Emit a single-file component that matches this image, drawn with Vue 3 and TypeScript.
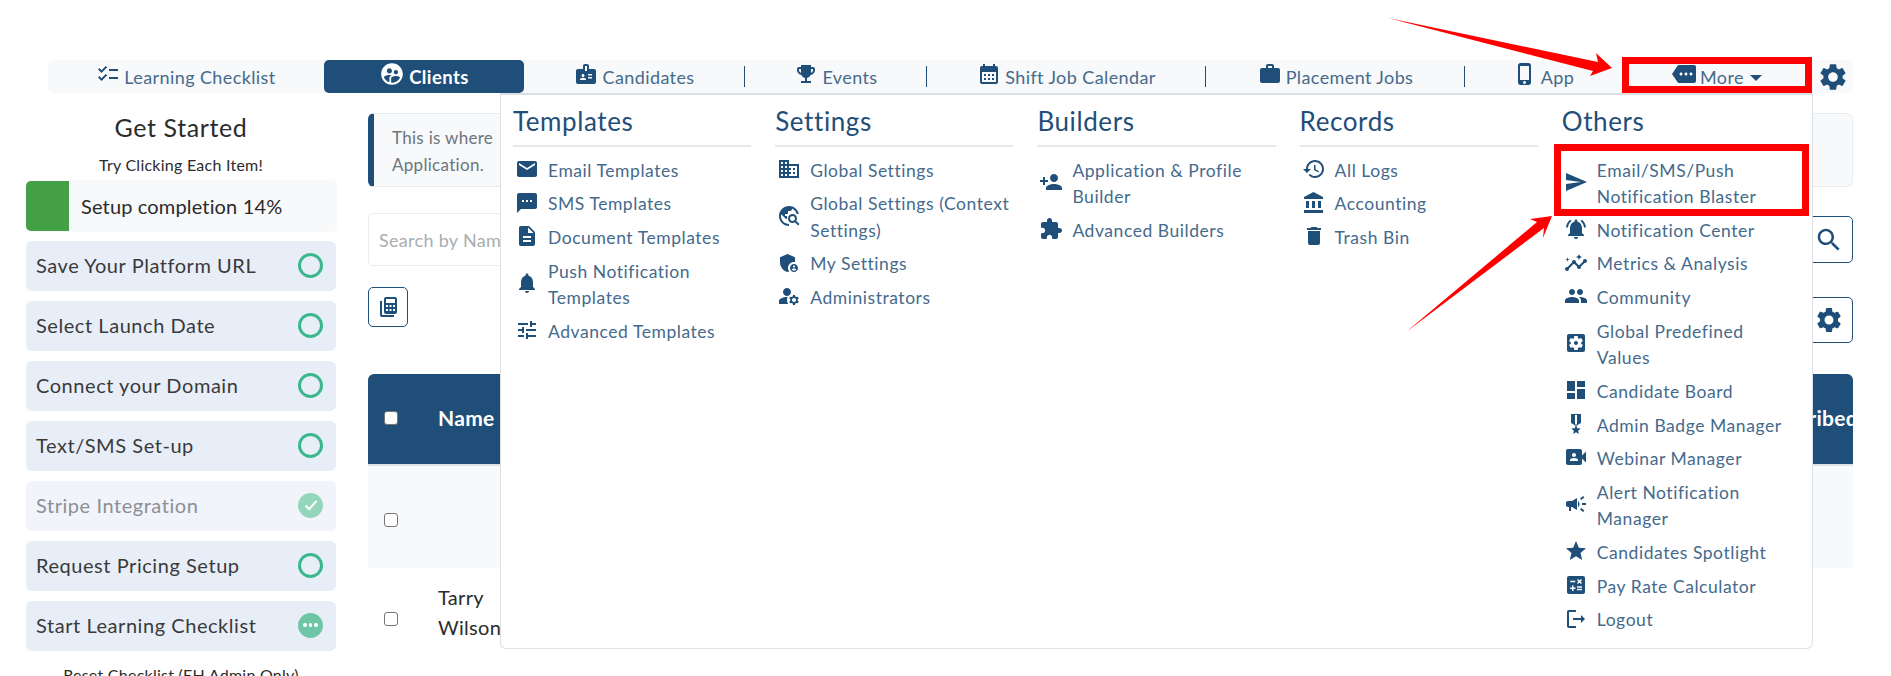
<script setup lang="ts">
type NavItem = { label: string; icon: string; active?: boolean; sep?: boolean; caret?: boolean }
type MenuItem = { label: string; icon: string }
type MenuColumn = { title: string; items: MenuItem[] }
type Step = { label: string; state: 'open' | 'done' | 'busy' }

const icons: Record<string, string> = {
  checklist: 'M22 7h-9v2h9V7zm0 8h-9v2h9v-2zM5.54 11L2 7.46l1.41-1.41 2.12 2.12 4.24-4.24 1.41 1.41L5.54 11zm0 8L2 15.46l1.41-1.41 2.12 2.12 4.24-4.24 1.41 1.41L5.54 19z',
  clients: 'M11.99 2c-5.52 0-10 4.48-10 10s4.48 10 10 10 10-4.48 10-10-4.48-10-10-10zm3.61 6.34c1.07 0 1.93.86 1.93 1.93 0 1.07-.86 1.93-1.93 1.93-1.07 0-1.93-.86-1.93-1.93-.01-1.07.86-1.93 1.93-1.93zm-6-1.58c1.3 0 2.36 1.06 2.36 2.36 0 1.3-1.06 2.36-2.36 2.36s-2.36-1.06-2.36-2.36c0-1.31 1.05-2.36 2.36-2.36zm0 9.13v3.75c-2.4-.75-4.3-2.6-5.14-4.96 1.05-1.12 3.67-1.69 5.14-1.69.53 0 1.2.08 1.9.22-1.64.87-1.9 2.02-1.9 2.68zM11.99 20c-.27 0-.53-.01-.79-.04v-4.07c0-1.42 2.94-2.13 4.4-2.13 1.07 0 2.92.39 3.84 1.15-1.17 2.97-4.06 5.09-7.45 5.09z',
  badge: 'M20 7h-5V4c0-1.1-.9-2-2-2h-2c-1.1 0-2 .9-2 2v3H4c-1.1 0-2 .9-2 2v11c0 1.1.9 2 2 2h16c1.1 0 2-.9 2-2V9c0-1.1-.9-2-2-2zM9 12c.83 0 1.5.67 1.5 1.5S9.83 15 9 15s-1.5-.67-1.5-1.5S8.17 12 9 12zm3 6H6v-.75c0-1 2-1.5 3-1.5s3 .5 3 1.5V18zm1-9h-2V4h2v5zm5 7.5h-4V15h4v1.5zm0-3h-4V12h4v1.5z',
  trophy: 'M19 5h-2V3H7v2H5c-1.1 0-2 .9-2 2v1c0 2.55 1.92 4.63 4.39 4.94.63 1.5 1.98 2.63 3.61 2.96V19H7v2h10v-2h-4v-3.1c1.63-.33 2.98-1.46 3.61-2.96C19.08 12.63 21 10.55 21 8V7c0-1.1-.9-2-2-2zM5 8V7h2v3.82C5.84 10.4 5 9.3 5 8zm14 0c0 1.3-.84 2.4-2 2.82V7h2v1z',
  calendar: 'M19 4h-1V2h-2v2H8V2H6v2H5c-1.11 0-1.99.9-1.99 2L3 20a2 2 0 0 0 2 2h14c1.1 0 2-.9 2-2V6c0-1.1-.9-2-2-2zm0 16H5V10h14v10zM9 14H7v-2h2v2zm4 0h-2v-2h2v2zm4 0h-2v-2h2v2zm-8 4H7v-2h2v2zm4 0h-2v-2h2v2zm4 0h-2v-2h2v2z',
  work: 'M20 6h-4V4c0-1.11-.89-2-2-2h-4c-1.11 0-2 .89-2 2v2H4c-1.11 0-1.99.89-1.99 2L2 19c0 1.11.89 2 2 2h16c1.11 0 2-.89 2-2V8c0-1.11-.89-2-2-2zm-6 0h-4V4h4v2z',
  phone: 'M15.5 1h-8C6.12 1 5 2.12 5 3.5v17C5 21.88 6.12 23 7.5 23h8c1.38 0 2.5-1.12 2.5-2.5v-17C18 2.12 16.88 1 15.5 1zm-4 21c-.83 0-1.5-.67-1.5-1.5s.67-1.5 1.5-1.5 1.5.67 1.5 1.5-.67 1.5-1.5 1.5zm4.5-4H7V4h9v14z',
  more: 'M22 3H7c-.69 0-1.23.35-1.59.88L0 12l5.41 8.11c.36.53.9.89 1.59.89h15c1.1 0 2-.9 2-2V5c0-1.1-.9-2-2-2zM9 13.5c-.83 0-1.5-.67-1.5-1.5s.67-1.5 1.5-1.5 1.5.67 1.5 1.5-.67 1.5-1.5 1.5zm5 0c-.83 0-1.5-.67-1.5-1.5s.67-1.5 1.5-1.5 1.5.67 1.5 1.5-.67 1.5-1.5 1.5zm5 0c-.83 0-1.5-.67-1.5-1.5s.67-1.5 1.5-1.5 1.5.67 1.5 1.5-.67 1.5-1.5 1.5z',
  gear: 'M19.14 12.94c.04-.3.06-.61.06-.94 0-.32-.02-.64-.07-.94l2.03-1.58c.18-.14.23-.41.12-.61l-1.92-3.32c-.12-.22-.37-.29-.59-.22l-2.39.96c-.5-.38-1.03-.7-1.62-.94l-.36-2.54c-.04-.24-.24-.41-.48-.41h-3.84c-.24 0-.43.17-.47.41l-.36 2.54c-.59.24-1.13.57-1.62.94l-2.39-.96c-.22-.08-.47 0-.59.22L2.74 8.87c-.12.21-.08.47.12.61l2.03 1.58c-.05.3-.09.63-.09.94s.02.64.07.94l-2.03 1.58c-.18.14-.23.41-.12.61l1.92 3.32c.12.22.37.29.59.22l2.39-.96c.5.38 1.03.7 1.62.94l.36 2.54c.05.24.24.41.48.41h3.84c.24 0 .44-.17.47-.41l.36-2.54c.59-.24 1.13-.56 1.62-.94l2.39.96c.22.08.47 0 .59-.22l1.92-3.32c.12-.22.07-.47-.12-.61l-2.01-1.58zM12 15.6c-1.98 0-3.6-1.62-3.6-3.6s1.62-3.6 3.6-3.6 3.6 1.62 3.6 3.6-1.62 3.6-3.6 3.6z',
  search: 'M15.5 14h-.79l-.28-.27C15.41 12.59 16 11.11 16 9.5 16 5.91 13.09 3 9.5 3S3 5.91 3 9.5 5.91 16 9.5 16c1.61 0 3.09-.59 4.23-1.57l.27.28v.79l5 4.99L20.49 19l-4.99-5zm-6 0C7.01 14 5 11.99 5 9.5S7.01 5 9.5 5 14 7.01 14 9.5 11.99 14 9.5 14z',
  email: 'M20 4H4c-1.1 0-1.99.9-1.99 2L2 18c0 1.1.9 2 2 2h16c1.1 0 2-.9 2-2V6c0-1.1-.9-2-2-2zm0 4l-8 5-8-5V6l8 5 8-5v2z',
  sms: 'M20 2H4c-1.1 0-1.99.9-1.99 2L2 22l4-4h14c1.1 0 2-.9 2-2V4c0-1.1-.9-2-2-2zM9 11H7V9h2v2zm4 0h-2V9h2v2zm4 0h-2V9h2v2z',
  doc: 'M14 2H6c-1.1 0-1.99.9-1.99 2L4 20c0 1.1.89 2 1.99 2H18c1.1 0 2-.9 2-2V8l-6-6zm2 16H8v-2h8v2zm0-4H8v-2h8v2zm-3-5V3.5L18.5 9H13z',
  bell: 'M12 22c1.1 0 2-.9 2-2h-4c0 1.1.89 2 2 2zm6-6v-5c0-3.07-1.64-5.64-4.5-6.32V4c0-.83-.67-1.5-1.5-1.5s-1.5.67-1.5 1.5v.68C7.63 5.36 6 7.92 6 11v5l-2 2v1h16v-1l-2-2z',
  tune: 'M3 17v2h6v-2H3zM3 5v2h10V5H3zm10 16v-2h8v-2h-8v-2h-2v6h2zM7 9v2H3v2h4v2h2V9H7zm14 4v-2H11v2h10zm-6-4h2V7h4V5h-4V3h-2v6z',
  domain: 'M12 7V3H2v18h20V7H12zM6 19H4v-2h2v2zm0-4H4v-2h2v2zm0-4H4V9h2v2zm0-4H4V5h2v2zm4 12H8v-2h2v2zm0-4H8v-2h2v2zm0-4H8V9h2v2zm0-4H8V5h2v2zm10 12h-8v-2h2v-2h-2v-2h2v-2h-2V9h8v10zm-2-8h-2v2h2v-2zm0 4h-2v2h2v-2z',
  travel: 'M19.3 16.9c.4-.7.7-1.5.7-2.4 0-2.5-2-4.5-4.5-4.5S11 12 11 14.5s2 4.5 4.5 4.5c.9 0 1.7-.3 2.4-.7l3.2 3.2 1.4-1.4-3.2-3.2zm-3.8.1c-1.4 0-2.5-1.1-2.5-2.5s1.1-2.5 2.5-2.5 2.5 1.1 2.5 2.5-1.1 2.5-2.5 2.5zM12 20v2C6.48 22 2 17.52 2 12S6.48 2 12 2c4.84 0 8.87 3.44 9.8 8h-2.07c-.64-2.46-2.4-4.47-4.73-5.41V5c0 1.1-.9 2-2 2h-2v2c0 .55-.45 1-1 1H8v2h2v3H9l-4.79-4.79C4.08 10.79 4 11.38 4 12c0 4.41 3.59 8 8 8z',
  shield: 'M17 11c.34 0 .67.04 1 .09V6.27L10.5 3 3 6.27v4.91c0 4.54 3.2 8.79 7.5 9.82.55-.13 1.08-.32 1.6-.55-.69-.98-1.1-2.17-1.1-3.45 0-3.31 2.69-6 6-6zM17 13c-2.21 0-4 1.79-4 4s1.79 4 4 4 4-1.79 4-4-1.79-4-4-4zm0 1.38c.62 0 1.12.51 1.12 1.12s-.51 1.12-1.12 1.12-1.12-.51-1.12-1.12.5-1.12 1.12-1.12zm0 5.37c-.93 0-1.74-.46-2.24-1.17.05-.72 1.51-1.08 2.24-1.08s2.19.36 2.24 1.08c-.5.71-1.31 1.17-2.24 1.17z',
  admins: 'M10.67 13.02c-.22-.01-.44-.02-.67-.02-2.42 0-4.68.67-6.61 1.82-.88.52-1.39 1.5-1.39 2.53V20h9.26c-.79-1.13-1.26-2.51-1.26-4 0-1.07.25-2.07.67-2.98zM10 12c2.21 0 4-1.79 4-4s-1.79-4-4-4-4 1.79-4 4 1.79 4 4 4zM20.75 16c0-.22-.03-.42-.06-.63l1.14-1.01-1-1.73-1.45.49c-.32-.27-.68-.48-1.08-.63L18 11h-2l-.3 1.49c-.4.15-.76.36-1.08.63l-1.45-.49-1 1.73 1.14 1.01c-.03.21-.06.41-.06.63s.03.42.06.63l-1.14 1.01 1 1.73 1.45-.49c.32.27.68.48 1.08.63L16 21h2l.3-1.49c.4-.15.76-.36 1.08-.63l1.45.49 1-1.73-1.14-1.01c.03-.21.06-.41.06-.63zM17 18c-1.1 0-2-.9-2-2s.9-2 2-2 2 .9 2 2-.9 2-2 2z',
  personAdd: 'M15 12c2.21 0 4-1.79 4-4s-1.79-4-4-4-4 1.79-4 4 1.79 4 4 4zm-9-2V7H4v3H1v2h3v3h2v-3h3v-2H6zm9 4c-2.67 0-8 1.34-8 4v2h16v-2c0-2.66-5.33-4-8-4z',
  puzzle: 'M20.5 11H19V7c0-1.1-.9-2-2-2h-4V3.5C13 2.12 11.88 1 10.5 1S8 2.12 8 3.5V5H4c-1.1 0-1.99.9-1.99 2v3.8H3.5c1.49 0 2.7 1.21 2.7 2.7s-1.21 2.7-2.7 2.7H2V20c0 1.1.9 2 2 2h3.8v-1.5c0-1.49 1.21-2.7 2.7-2.7 1.49 0 2.7 1.21 2.7 2.7V22H17c1.1 0 2-.9 2-2v-4h1.5c1.38 0 2.5-1.12 2.5-2.5S21.88 11 20.5 11z',
  history: 'M13 3c-4.97 0-9 4.03-9 9H1l3.89 3.89.07.14L9 12H6c0-3.87 3.13-7 7-7s7 3.13 7 7-3.13 7-7 7c-1.93 0-3.68-.79-4.94-2.06l-1.42 1.42C8.27 19.99 10.51 21 13 21c4.97 0 9-4.03 9-9s-4.03-9-9-9zm-1 5v5l4.28 2.54.72-1.21-3.5-2.08V8H12z',
  bank: 'M4 10v7h3v-7H4zm6 0v7h3v-7h-3zM2 22h19v-3H2v3zm14-12v7h3v-7h-3zm-4.5-9L2 6v2h19V6l-9.5-5z',
  trash: 'M6 19c0 1.1.9 2 2 2h8c1.1 0 2-.9 2-2V7H6v12zM19 4h-3.5l-1-1h-5l-1 1H5v2h14V4z',
  send: 'M2.01 21L23 12 2.01 3 2 10l15 2-15 2z',
  bellActive: 'M7.58 4.08L6.15 2.65C3.75 4.48 2.17 7.3 2.03 10.5h2c.15-2.65 1.51-4.97 3.55-6.42zm12.39 6.42h2c-.15-3.2-1.73-6.02-4.12-7.85l-1.42 1.43c2.02 1.45 3.39 3.77 3.54 6.42zM18 11c0-3.07-1.64-5.64-4.5-6.32V4c0-.83-.67-1.5-1.5-1.5s-1.5.67-1.5 1.5v.68C7.63 5.36 6 7.92 6 11v5l-2 2v1h16v-1l-2-2v-5zm-6 11c.14 0 .27-.01.4-.04.65-.14 1.18-.58 1.44-1.18.1-.24.15-.5.15-.78h-4c.01 1.1.9 2 2.01 2z',
  insights: 'M21 8c-1.45 0-2.26 1.44-1.93 2.51l-3.55 3.56c-.3-.09-.74-.09-1.04 0l-2.55-2.55C12.27 10.45 11.46 9 10 9c-1.45 0-2.27 1.44-1.93 2.52l-4.56 4.55C2.44 15.74 1 16.55 1 18c0 1.1.9 2 2 2 1.45 0 2.26-1.44 1.93-2.51l4.55-4.56c.3.09.74.09 1.04 0l2.55 2.55C12.73 16.55 13.54 18 15 18c1.45 0 2.27-1.44 1.93-2.52l3.56-3.55c1.07.33 2.51-.48 2.51-1.93 0-1.1-.9-2-2-2zM15 9l.94-2.07L18 6l-2.06-.93L15 3l-.92 2.07L12 6l2.08.93zM3.5 11L4 9l2-.5L4 8l-.5-2L3 8l-2 .5L3 9z',
  people: 'M16 11c1.66 0 2.99-1.34 2.99-3S17.66 5 16 5c-1.66 0-3 1.34-3 3s1.34 3 3 3zm-8 0c1.66 0 2.99-1.34 2.99-3S9.66 5 8 5C6.34 5 5 6.34 5 8s1.34 3 3 3zm0 2c-2.33 0-7 1.17-7 3.5V19h14v-2.5c0-2.33-4.67-3.5-7-3.5zm8 0c-.29 0-.62.02-.97.05 1.16.84 1.97 1.97 1.97 3.45V19h6v-2.5c0-2.33-4.67-3.5-7-3.5z',
  gearBox: 'M12 10c-1.1 0-2 .9-2 2s.9 2 2 2 2-.9 2-2-.9-2-2-2zm7-7H5c-1.11 0-2 .9-2 2v14c0 1.1.89 2 2 2h14c1.11 0 2-.9 2-2V5c0-1.1-.89-2-2-2zm-1.75 9c0 .23-.02.46-.05.68l1.48 1.16c.13.11.17.3.08.45l-1.4 2.42c-.09.15-.27.21-.43.15l-1.74-.7c-.36.28-.76.51-1.18.69l-.26 1.85c-.03.17-.18.3-.35.3h-2.8c-.17 0-.32-.13-.35-.29l-.26-1.85c-.43-.18-.82-.41-1.18-.69l-1.74.7c-.16.06-.34 0-.43-.15l-1.4-2.42c-.09-.15-.05-.34.08-.45l1.48-1.16c-.03-.23-.05-.46-.05-.69 0-.23.02-.46.05-.68l-1.48-1.16c-.13-.11-.17-.3-.08-.45l1.4-2.42c.09-.15.27-.21.43-.15l1.74.7c.36-.28.76-.51 1.18-.69l.26-1.85c.03-.17.18-.3.35-.3h2.8c.17 0 .32.13.35.29l.26 1.85c.43.18.82.41 1.18.69l1.74-.7c.16-.06.34 0 .43.15l1.4 2.42c.09.15.05.34-.08.45l-1.48 1.16c.03.23.05.46.05.69z',
  dashboard: 'M3 13h8V3H3v10zm0 8h8v-6H3v6zm10 0h8V11h-8v10zm0-18v6h8V3h-8z',
  medal: 'M17 10.43V2H7v8.43c0 .35.18.68.49.86l4.18 2.51-.99 2.34-3.41.29 2.59 2.24L9.07 22 12 20.23 14.93 22l-.78-3.33 2.59-2.24-3.41-.29-.99-2.34 4.18-2.51c.3-.18.48-.5.48-.86zm-4 1.8l-1 .6-1-.6V3h2v9.23z',
  video: 'M18 10.48V6c0-1.1-.9-2-2-2H4c-1.1 0-2 .9-2 2v12c0 1.1.9 2 2 2h12c1.1 0 2-.9 2-2v-4.48l4 3.98v-11l-4 3.98zM10 8c1.1 0 2 .9 2 2s-.9 2-2 2-2-.9-2-2 .9-2 2-2zm4 8H6v-.57c0-.81.48-1.53 1.22-1.85.85-.37 1.79-.58 2.78-.58.99 0 1.93.21 2.78.58.74.32 1.22 1.04 1.22 1.85V16z',
  campaign: 'M18 11v2h4v-2h-4zm-2 6.61c.96.71 2.21 1.65 3.2 2.39.4-.53.8-1.07 1.2-1.6-.99-.74-2.24-1.68-3.2-2.4-.4.54-.8 1.08-1.2 1.61zM20.4 5.6c-.4-.53-.8-1.07-1.2-1.6-.99.74-2.24 1.68-3.2 2.4.4.53.8 1.07 1.2 1.6.96-.72 2.21-1.65 3.2-2.4zM4 9c-1.1 0-2 .9-2 2v2c0 1.1.9 2 2 2h1v4h2v-4h1l5 3V6L8 9H4zm11.5 3c0-1.33-.58-2.53-1.5-3.35v6.69c.92-.81 1.5-2.01 1.5-3.34z',
  star: 'M12 17.27L18.18 21l-1.64-7.03L22 9.24l-7.19-.61L12 2 9.19 8.63 2 9.24l5.46 4.73L5.82 21z',
  calculate: 'M19 3H5c-1.1 0-2 .9-2 2v14c0 1.1.9 2 2 2h14c1.1 0 2-.9 2-2V5c0-1.1-.9-2-2-2zm-5.97 4.06L14.09 6l1.41 1.41L16.91 6l1.06 1.06-1.41 1.41 1.41 1.41-1.06 1.06-1.41-1.4-1.41 1.41-1.06-1.06 1.41-1.41-1.41-1.42zm-6.78.66h5v1.5h-5v-1.5zM11.5 16h-2v2H8v-2H6v-1.5h2v-2h1.5v2h2V16zm6.5 1.25h-5v-1.5h5v1.5zm0-2.5h-5v-1.5h5v1.5z',
  logout: 'M5 5h7V3H5c-1.1 0-2 .9-2 2v14c0 1.1.9 2 2 2h7v-2H5V5zm16 7l-4-4v3H9v2h8v3l4-4z',
  calcStack: 'M4 6h2v14h12v2H6a2 2 0 0 1-2-2V6zM10 2h9a2 2 0 0 1 2 2v13a2 2 0 0 1-2 2h-9a2 2 0 0 1-2-2V4a2 2 0 0 1 2-2zm0 2v4h9V4h-9zm0 6v2h2v-2h-2zm3.5 0v2h2v-2h-2zm3.5 0v2h2v-2h-2zm-7 4v2h2v-2h-2zm3.5 0v2h2v-2h-2zm3.5 0v2h2v-2h-2z',
}

const navItems: NavItem[] = [
  { label: 'Learning Checklist', icon: 'checklist' },
  { label: 'Clients', icon: 'clients', active: true },
  { label: 'Candidates', icon: 'badge', sep: true },
  { label: 'Events', icon: 'trophy', sep: true },
  { label: 'Shift Job Calendar', icon: 'calendar', sep: true },
  { label: 'Placement Jobs', icon: 'work', sep: true },
  { label: 'App', icon: 'phone' },
  { label: 'More', icon: 'more', caret: true },
]

const columns: MenuColumn[] = [
  {
    title: 'Templates',
    items: [
      { label: 'Email Templates', icon: 'email' },
      { label: 'SMS Templates', icon: 'sms' },
      { label: 'Document Templates', icon: 'doc' },
      { label: 'Push Notification Templates', icon: 'bell' },
      { label: 'Advanced Templates', icon: 'tune' },
    ],
  },
  {
    title: 'Settings',
    items: [
      { label: 'Global Settings', icon: 'domain' },
      { label: 'Global Settings (Context Settings)', icon: 'travel' },
      { label: 'My Settings', icon: 'shield' },
      { label: 'Administrators', icon: 'admins' },
    ],
  },
  {
    title: 'Builders',
    items: [
      { label: 'Application & Profile Builder', icon: 'personAdd' },
      { label: 'Advanced Builders', icon: 'puzzle' },
    ],
  },
  {
    title: 'Records',
    items: [
      { label: 'All Logs', icon: 'history' },
      { label: 'Accounting', icon: 'bank' },
      { label: 'Trash Bin', icon: 'trash' },
    ],
  },
  {
    title: 'Others',
    items: [
      { label: 'Email/SMS/Push Notification Blaster', icon: 'send' },
      { label: 'Notification Center', icon: 'bellActive' },
      { label: 'Metrics & Analysis', icon: 'insights' },
      { label: 'Community', icon: 'people' },
      { label: 'Global Predefined Values', icon: 'gearBox' },
      { label: 'Candidate Board', icon: 'dashboard' },
      { label: 'Admin Badge Manager', icon: 'medal' },
      { label: 'Webinar Manager', icon: 'video' },
      { label: 'Alert Notification Manager', icon: 'campaign' },
      { label: 'Candidates Spotlight', icon: 'star' },
      { label: 'Pay Rate Calculator', icon: 'calculate' },
      { label: 'Logout', icon: 'logout' },
    ],
  },
]

const steps: Step[] = [
  { label: 'Save Your Platform URL', state: 'open' },
  { label: 'Select Launch Date', state: 'open' },
  { label: 'Connect your Domain', state: 'open' },
  { label: 'Text/SMS Set-up', state: 'open' },
  { label: 'Stripe Integration', state: 'done' },
  { label: 'Request Pricing Setup', state: 'open' },
  { label: 'Start Learning Checklist', state: 'busy' },
]

const setupPercent = 14
</script>

<template>
  <div class="page">
    <nav class="nav">
      <a
        v-for="item in navItems"
        :key="item.label"
        class="nav-item"
        :class="{ active: item.active, sep: item.sep }"
      >
        <svg viewBox="0 0 24 24"><path :d="icons[item.icon]" /></svg>
        <span>{{ item.label }}</span>
        <i v-if="item.caret" class="caret" />
      </a>
      <a class="nav-gear">
        <svg viewBox="0 0 24 24"><path :d="icons.gear" /></svg>
      </a>
    </nav>

    <div class="body">
      <!-- checklist on the left -->
      <aside class="side">
        <h2 class="side-title">Get Started</h2>
        <p class="side-hint">Try Clicking Each Item!</p>
        <div class="progress">
          <div class="progress-bar" />
          <span class="progress-text">Setup completion {{ setupPercent }}%</span>
        </div>
        <div
          v-for="step in steps"
          :key="step.label"
          class="step"
          :class="{ faded: step.state === 'done' }"
        >
          <span>{{ step.label }}</span>
          <span class="dot" :class="step.state">
            <svg v-if="step.state === 'done'" viewBox="0 0 24 24"><path d="M6 12.5l4 4 8-9" /></svg>
            <template v-else-if="step.state === 'busy'"><i /><i /><i /></template>
          </span>
        </div>
        <p class="side-reset">Reset Checklist (EH Admin Only)</p>
      </aside>

      <main class="main">
        <div class="banner">This is where<br />Application.</div>

        <div class="search-row">
          <div class="search-input">Search by Name</div>
          <button class="icon-btn search-btn">
            <svg viewBox="0 0 24 24"><path :d="icons.search" /></svg>
          </button>
        </div>

        <div class="tools-row">
          <button class="icon-btn calc-btn">
            <svg viewBox="0 0 24 24"><path fill-rule="evenodd" :d="icons.calcStack" /></svg>
          </button>
          <button class="icon-btn gear-btn">
            <svg viewBox="0 0 24 24"><path :d="icons.gear" /></svg>
          </button>
        </div>

        <div class="table">
          <div class="row head">
            <span class="check"><i class="box" /></span>
            <span class="name">Name</span>
            <span class="subscribed">Subscribed</span>
          </div>
          <div class="row striped">
            <span class="check"><i class="box" /></span>
          </div>
          <div class="row">
            <span class="check"><i class="box" /></span>
            <span class="name">Tarry<br />Wilson</span>
          </div>
        </div>
      </main>
    </div>

    <!-- dropdown opened from More -->
    <div class="menu">
      <section v-for="col in columns" :key="col.title" class="menu-col">
        <h3 class="menu-title">{{ col.title }}</h3>
        <a v-for="item in col.items" :key="item.label" class="menu-item">
          <svg viewBox="0 0 24 24"><path :d="icons[item.icon]" /></svg>
          <span>{{ item.label }}</span>
        </a>
      </section>
    </div>

    <!-- red annotations painted over the screenshot -->
    <div class="mark mark-more" />
    <div class="mark mark-blaster" />
    <svg class="arrows" viewBox="0 0 1891 676">
      <polygon points="1388,18 1598,62 1596,53 1612,68 1590,76 1593,71" />
      <polygon points="1406,332 1537,222 1530,219 1552,216 1543,238 1544,228" />
    </svg>
  </div>
</template>

<style scoped>
.page {
  position: relative;
  width: 1891px;
  height: 676px;
  overflow: hidden;
  padding-top: 60px;
  box-sizing: border-box;
  font-family: Lato, "Noto Sans", sans-serif;
  color: #2b2b2b;
  background: #fff;
}

/* ---------- top nav ---------- */
.nav {
  display: grid;
  grid-template-columns: 276px 200px 221px 182px 279px 259px 157px 190px 41px;
  height: 33px;
  margin: 0 38px 0 48px;
  background: #f8f9fa;
  border-radius: 5px;
}
.nav-item {
  position: relative;
  display: flex;
  align-items: center;
  justify-content: center;
  gap: 4px;
  font-size: 18px;
  letter-spacing: 0.4px;
  color: #456a8c;
}
.nav-item svg {
  width: 24px;
  height: 24px;
  fill: #1f4e79;
  transform: translateY(-3px);
}
.nav-item.active {
  background: #1f4e79;
  color: #fff;
  font-weight: 700;
  border-radius: 5px;
  font-size: 18.5px;
}
.nav-item.active svg {
  width: 26px;
  height: 26px;
  fill: #fff;
}
.nav-item.sep::after {
  content: "";
  position: absolute;
  right: 0;
  top: 6px;
  height: 21px;
  border-right: 1px solid #1f4e79;
}
.caret {
  width: 0;
  height: 0;
  margin-top: 3px;
  margin-left: 2px;
  border-left: 6px solid transparent;
  border-right: 6px solid transparent;
  border-top: 6px solid #1f4e79;
}
.nav-gear {
  display: flex;
  align-items: center;
  justify-content: center;
}
.nav-gear svg {
  width: 32px;
  height: 32px;
  fill: #1f4e79;
}

/* ---------- body ---------- */
.body {
  display: flex;
  gap: 32px;
  padding: 0 38px 0 26px;
}

.side {
  width: 310px;
  flex: none;
  display: flex;
  flex-direction: column;
  gap: 10px;
}
.side-title {
  margin: 19px 0 0;
  font-size: 25px;
  font-weight: 400;
  line-height: 30px;
  text-align: center;
  letter-spacing: 0.6px;
}
.side-hint {
  margin: 1px 0 -6px;
  font-size: 16px;
  line-height: 24px;
  text-align: center;
  letter-spacing: 0.25px;
}
.progress {
  display: flex;
  align-items: center;
  height: 50px;
  background: #f8f9fa;
  border-radius: 5px;
  box-shadow: 0 0 2px rgba(0, 0, 0, 0.1);
  overflow: hidden;
}
.progress-bar {
  width: 43px;
  height: 100%;
  background: #43a047;
}
.progress-text {
  margin-left: 12px;
  font-size: 20px;
  letter-spacing: 0.15px;
}
.step {
  display: flex;
  align-items: center;
  justify-content: space-between;
  height: 50px;
  box-sizing: border-box;
  padding: 0 13px 2px 10px;
  background: #e8eef8;
  border-radius: 6px;
  font-size: 20px;
  letter-spacing: 0.55px;
  color: #3a3a3a;
}
.step.faded {
  background: #f1f4fb;
  color: #8b8f96;
}
.dot {
  width: 25px;
  height: 25px;
  box-sizing: border-box;
  border-radius: 50%;
  display: flex;
  align-items: center;
  justify-content: center;
  gap: 2px;
}
.dot.open {
  border: 3px solid #3bb78c;
}
.dot.done {
  background: #93d6bb;
}
.dot.done svg {
  width: 22px;
  height: 22px;
  fill: none;
  stroke: #fff;
  stroke-width: 2.4;
}
.dot.busy {
  background: #6fc6a6;
}
.dot.busy i {
  width: 3.5px;
  height: 3.5px;
  border-radius: 50%;
  background: #fff;
}
.side-reset {
  margin: 3px 0 0;
  font-size: 16px;
  line-height: 22px;
  text-align: center;
  letter-spacing: 0.25px;
  white-space: nowrap;
}

.main {
  flex: 1;
  min-width: 0;
}
.banner {
  height: 74px;
  box-sizing: border-box;
  margin-top: 20px;
  padding: 10px 18px;
  background: #f8f9fa;
  border: 1px solid #e9ecef;
  border-left: 6px solid #1f4e79;
  border-radius: 6px;
  font-size: 17px;
  line-height: 27px;
  letter-spacing: 0.3px;
  color: #6c757d;
}
.search-row {
  display: flex;
  align-items: center;
  margin-top: 26px;
}
.search-input {
  flex: 1;
  height: 53px;
  box-sizing: border-box;
  padding: 0 10px;
  display: flex;
  align-items: center;
  border: 1px solid #e9ecef;
  border-radius: 5px;
  font-size: 18px;
  letter-spacing: 0.3px;
  color: #a9adb2;
}
.icon-btn {
  padding: 0;
  display: flex;
  align-items: center;
  justify-content: center;
  background: #fff;
  border: 1px solid #1f4e79;
  border-radius: 5px;
}
.icon-btn svg {
  fill: #1f4e79;
}
.search-btn {
  width: 48px;
  height: 47px;
}
.search-btn svg {
  width: 30px;
  height: 30px;
}
.tools-row {
  display: flex;
  justify-content: space-between;
  align-items: flex-start;
  height: 56px;
  margin-top: 21px;
}
.calc-btn {
  width: 40px;
  height: 40px;
}
.calc-btn svg {
  width: 24px;
  height: 24px;
}
.gear-btn {
  width: 48px;
  height: 46px;
  margin-top: 10px;
}
.gear-btn svg {
  width: 30px;
  height: 30px;
}

.table {
  margin-top: 31px;
  overflow: hidden;
  border-radius: 6px 6px 0 0;
}
.row {
  display: flex;
  align-items: center;
  height: 102px;
  font-size: 20px;
  letter-spacing: 0.3px;
  line-height: 30px;
}
.row.head {
  height: 92px;
  padding-bottom: 2px;
  background: #1f4e79;
  border-bottom: 2px solid #dee2e6;
  box-sizing: border-box;
  color: #fff;
  font-weight: 700;
  font-size: 21px;
}
.row.striped {
  padding-top: 6px;
  box-sizing: border-box;
  background: #f8f9fa;
}
.check {
  width: 70px;
  padding-left: 16px;
  box-sizing: border-box;
  flex: none;
  display: flex;
}
.row:last-child .name {
  margin-top: -14px;
}
.box {
  width: 14px;
  height: 14px;
  box-sizing: border-box;
  background: #fff;
  border: 1px solid #767676;
  border-radius: 3px;
}
.subscribed {
  margin-left: auto;
  margin-right: -5px;
}

/* ---------- dropdown ---------- */
.menu {
  position: absolute;
  top: 93px;
  left: 500px;
  width: 1313px;
  height: 556px;
  box-sizing: border-box;
  display: grid;
  grid-template-columns: repeat(5, 1fr);
  background: #fff;
  border: 1px solid #dcdfe3;
  border-top: 2px solid #dcdfe3;
  border-radius: 0 0 6px 6px;
}
.menu-col {
  padding: 0 12px;
}
.menu-title {
  margin: 0 0 7px;
  height: 52px;
  line-height: 52px;
  box-sizing: border-box;
  border-bottom: 2px solid #e6e8ea;
  font-size: 26px;
  font-weight: 400;
  letter-spacing: 0.6px;
  color: #1f4e79;
}
.menu-item {
  display: flex;
  align-items: center;
  gap: 9px;
  padding: 3.65px 2px;
  font-size: 17.5px;
  line-height: 26.4px;
  letter-spacing: 0.55px;
  color: #456a8c;
}
.menu-item svg {
  flex: none;
  width: 24px;
  height: 24px;
  fill: #1f4e79;
  transform: translateY(-2px);
}

/* ---------- annotations ---------- */
.mark {
  position: absolute;
  box-sizing: border-box;
  border: 7.5px solid #f00;
}
.mark-more {
  left: 1622px;
  top: 57px;
  width: 190px;
  height: 36px;
}
.mark-blaster {
  left: 1554px;
  top: 144px;
  width: 255px;
  height: 72px;
}
.arrows {
  position: absolute;
  inset: 0;
  width: 1891px;
  height: 676px;
  fill: #f00;
  pointer-events: none;
}
</style>

<style>
html,
body {
  margin: 0;
  overflow: hidden;
  background: #fff;
}
</style>
